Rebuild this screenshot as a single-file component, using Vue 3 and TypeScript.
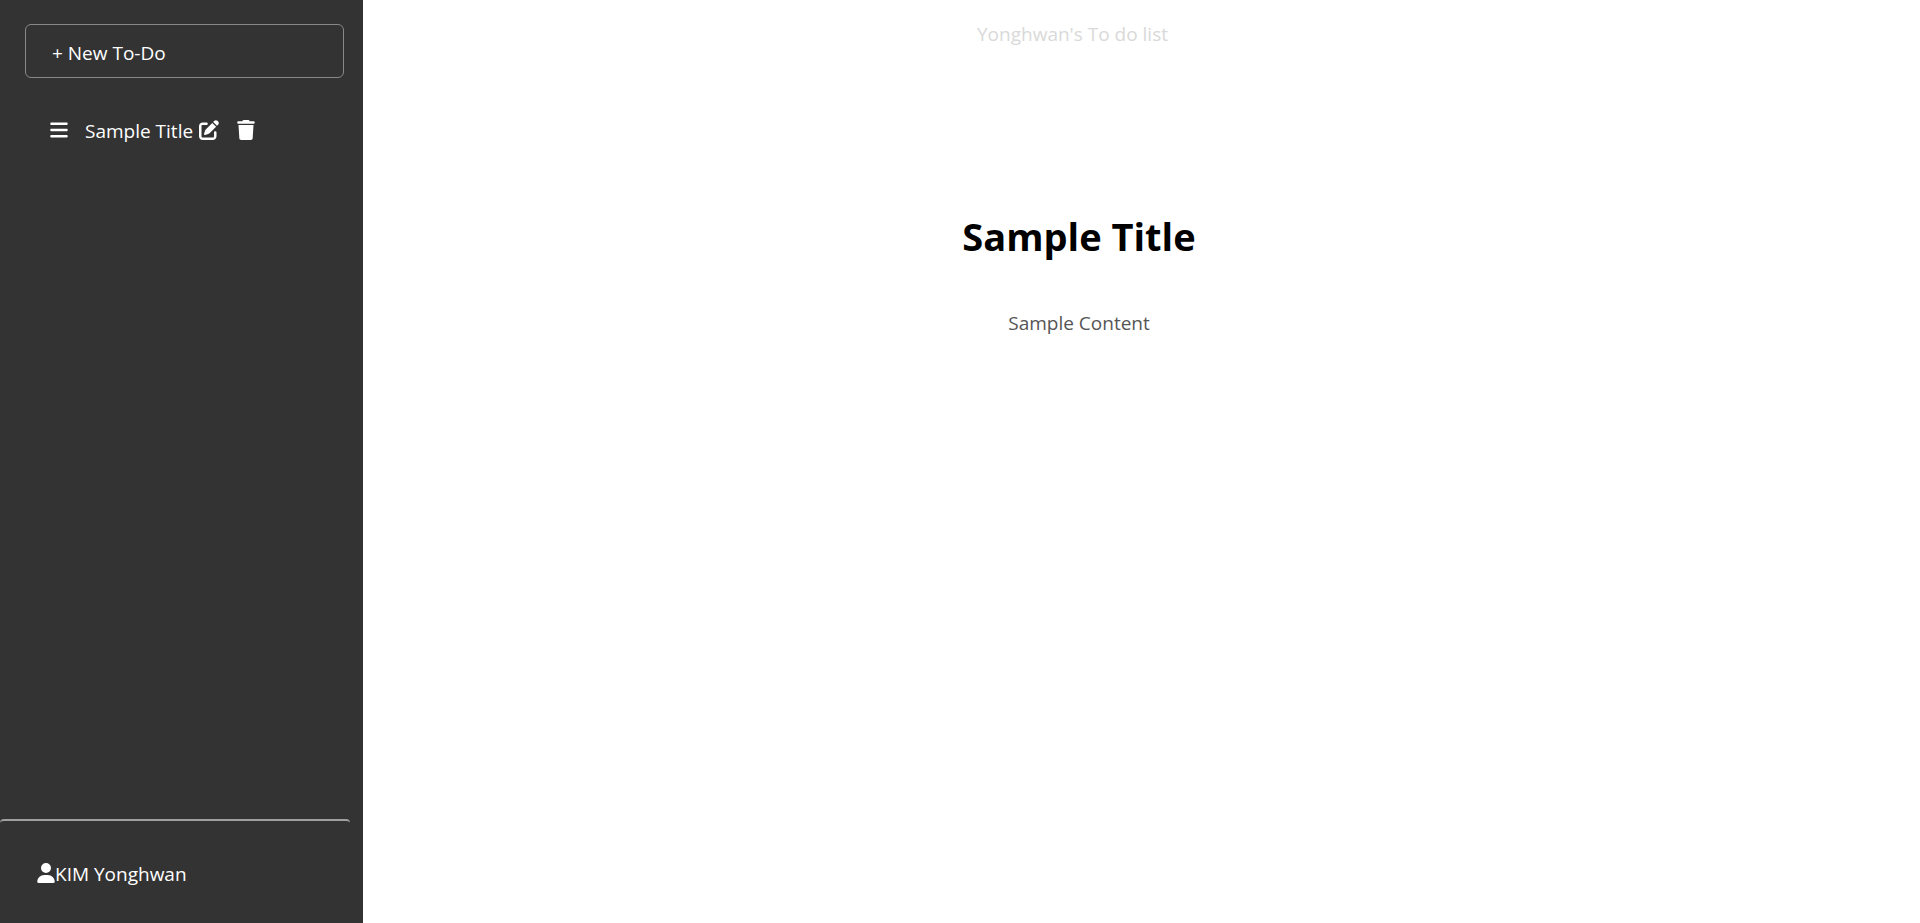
<script setup lang="ts">
import { ref } from 'vue'

interface Todo {
  id: number
  title: string
  content: string
}

const todos = ref<Todo[]>([{ id: 1, title: 'Sample Title', content: 'Sample Content' }])
const selected = ref<Todo>(todos.value[0])
const userName = 'KIM Yonghwan'
</script>

<template>
  <div class="layout">
    <aside class="sidebar">
      <button type="button" class="new-todo">+ New To-Do</button>

      <ul class="todo-list">
        <li v-for="todo in todos" :key="todo.id" class="todo-item">
          <svg class="icon narrow" viewBox="0 0 448 512" aria-hidden="true">
            <path d="M0 96C0 78.300 14.300 64 32 64H416c17.700 0 32 14.300 32 32s-14.300 32-32 32H32C14.300 128 0 113.700 0 96zM0 256c0-17.700 14.300-32 32-32H416c17.700 0 32 14.300 32 32s-14.300 32-32 32H32c-17.700 0-32-14.300-32-32zM448 416c0 17.700-14.300 32-32 32H32c-17.700 0-32-14.300-32-32s14.300-32 32-32H416c17.700 0 32 14.300 32 32z" />
          </svg>
          <button type="button" class="todo-title" @click="selected = todo">{{ todo.title }}</button>
          <button type="button" class="icon-button" aria-label="Edit">
            <svg class="icon" viewBox="0 0 512 512" aria-hidden="true">
              <path d="M471.600 21.700c-21.900-21.900-57.300-21.900-79.200 0L362.300 51.700l97.900 97.900 30.100-30.100c21.900-21.900 21.900-57.300 0-79.200L471.600 21.700zm-299.200 220c-6.100 6.100-10.800 13.600-13.500 21.900l-29.600 88.800c-2.900 8.600-.6 18.100 5.800 24.600s15.900 8.700 24.600 5.800l88.800-29.600c8.200-2.700 15.700-7.400 21.900-13.500L437.700 172.300 339.700 74.300 172.400 241.700zM96 64C43 64 0 107 0 160V416c0 53 43 96 96 96H352c53 0 96-43 96-96V320c0-17.700-14.300-32-32-32s-32 14.300-32 32v96c0 17.700-14.300 32-32 32H96c-17.700 0-32-14.300-32-32V160c0-17.700 14.300-32 32-32h96c17.700 0 32-14.300 32-32s-14.300-32-32-32H96z" />
            </svg>
          </button>
          <button type="button" class="icon-button remove" aria-label="Delete">
            <svg class="icon narrow" viewBox="0 0 448 512" aria-hidden="true">
              <path d="M135.200 17.700C140.600 6.800 151.700 0 163.800 0H284.200c12.100 0 23.200 6.800 28.600 17.700L320 32h96c17.700 0 32 14.300 32 32s-14.300 32-32 32H32C14.300 96 0 81.700 0 64S14.300 32 32 32h96l7.200-14.300zM32 128H416L394.800 467c-1.600 25.300-22.600 45-47.900 45H101.100c-25.300 0-46.300-19.700-47.900-45L32 128z" />
            </svg>
          </button>
        </li>
      </ul>

      <div class="user">
        <svg class="icon narrow" viewBox="0 0 448 512" aria-hidden="true">
          <path d="M224 256A128 128 0 1 0 224 0a128 128 0 1 0 0 256zm-45.700 48C79.800 304 0 383.800 0 482.300C0 498.700 13.300 512 29.700 512H418.300c16.400 0 29.700-13.300 29.700-29.700C448 383.800 368.200 304 269.700 304H178.300z" />
        </svg>
        <span class="user-name">{{ userName }}</span>
      </div>
    </aside>

    <main class="content">
      <header class="page-name">Yonghwan's To do list</header>
      <article class="todo-detail">
        <h1>{{ selected.title }}</h1>
        <p>{{ selected.content }}</p>
      </article>
    </main>
  </div>
</template>

<style>
body {
  margin: 0;
  background: #fff;
}
</style>

<style scoped>
.layout {
  display: flex;
  min-height: 100vh;
  font-family: "Segoe UI", "Open Sans", "Noto Sans", sans-serif;
  font-size: 19px;
  line-height: 28px;
}

button {
  margin: 0;
  padding: 0;
  border: 0;
  background: none;
  color: inherit;
  font: inherit;
  cursor: pointer;
}

.sidebar {
  display: flex;
  flex: 0 0 363px;
  flex-direction: column;
  box-sizing: border-box;
  background: #333;
  color: #fff;
}

.new-todo {
  margin: 24px 19px 0 25px;
  padding: 14px 26px 10px;
  border: 1px solid #888;
  border-radius: 6px;
  text-align: left;
}

.todo-list {
  flex: 1;
  margin: 37px 0 0;
  padding: 0 50px;
  list-style: none;
}

.todo-item {
  display: flex;
  align-items: center;
}

.icon {
  display: block;
  width: 20px;
  height: 20px;
  fill: currentColor;
}

.icon.narrow {
  width: 18px;
}

.todo-title,
.user-name {
  padding-top: 2px;
}

.todo-title {
  margin: 0 6px 0 17px;
}

.icon-button.remove {
  margin-left: 18px;
}

.user {
  display: flex;
  align-items: center;
  margin-right: 13px;
  padding: 37px 37px 35px;
  border-top: 2px solid #a0a0a0;
  border-radius: 4px;
}

.content {
  flex: 1;
  color: #555;
  text-align: center;
}

.page-name {
  padding: 20px 138px 0 0;
  color: #d9d9d9;
}

.todo-detail {
  padding: 160px 125px 0 0;
}

h1 {
  margin: 0;
  color: #000;
  font-size: 38px;
  line-height: 56px;
}

p {
  margin: 45px 0 0;
}
</style>
